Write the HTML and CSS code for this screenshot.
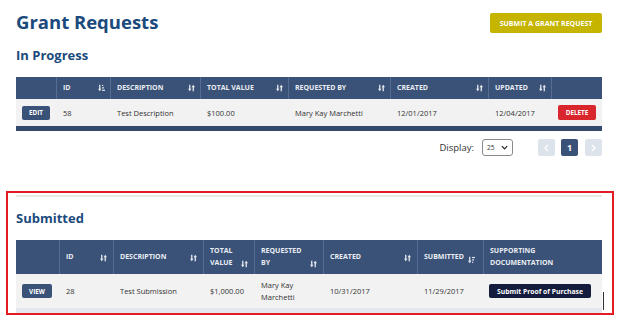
FILE: index.html
```html
<!DOCTYPE html>
<html lang="en">
<head>
<meta charset="utf-8">
<title>Grant Requests</title>
<link rel="stylesheet" href="styles.css">
</head>
<body>
<svg class="defs" width="0" height="0" aria-hidden="true">
  <defs>
    <symbol id="sort" viewBox="0 0 8 8">
      <line x1="2" y1="0.3" x2="2" y2="5.5" stroke="currentColor" stroke-width="1.5"/>
      <polygon points="0,4.8 4,4.8 2,7.8" fill="currentColor"/>
      <line x1="6" y1="2.5" x2="6" y2="7.7" stroke="currentColor" stroke-width="1.5"/>
      <polygon points="4,3.2 8,3.2 6,0.2" fill="currentColor"/>
    </symbol>
    <symbol id="sort-asc" viewBox="0 0 8 8">
      <line x1="2" y1="0.3" x2="2" y2="5.5" stroke="currentColor" stroke-width="1.5"/>
      <polygon points="0,4.8 4,4.8 2,7.8" fill="currentColor"/>
      <rect x="4.6" y="0.5" width="1.4" height="1.3" fill="currentColor"/>
      <rect x="4.6" y="3.2" width="2.4" height="1.3" fill="currentColor"/>
      <rect x="4.6" y="5.9" width="3.4" height="1.4" fill="currentColor"/>
    </symbol>
    <symbol id="sort-desc" viewBox="0 0 8 8">
      <line x1="2" y1="0.3" x2="2" y2="5.5" stroke="currentColor" stroke-width="1.5"/>
      <polygon points="0,4.8 4,4.8 2,7.8" fill="currentColor"/>
      <rect x="4.6" y="0.5" width="3.4" height="1.3" fill="currentColor"/>
      <rect x="4.6" y="3.2" width="2.4" height="1.3" fill="currentColor"/>
      <rect x="4.6" y="5.9" width="1.4" height="1.4" fill="currentColor"/>
    </symbol>
  </defs>
</svg>

<div class="page">
  <header class="top">
    <h1 class="title">Grant Requests</h1>
    <button class="btn-submit">SUBMIT A GRANT REQUEST</button>
  </header>

  <h2 class="section-title">In Progress</h2>

  <table class="grid grid-progress">
    <colgroup>
      <col class="w40"><col class="w54"><col class="w90"><col class="w88"><col class="w102"><col class="w98"><col class="w63"><col class="w51">
    </colgroup>
    <thead>
      <tr>
        <th></th>
        <th><div class="th-in"><span>ID</span><svg class="ico"><use href="#sort-asc"/></svg></div></th>
        <th><div class="th-in"><span>DESCRIPTION</span><svg class="ico"><use href="#sort"/></svg></div></th>
        <th><div class="th-in"><span>TOTAL VALUE</span><svg class="ico"><use href="#sort"/></svg></div></th>
        <th><div class="th-in"><span>REQUESTED BY</span><svg class="ico"><use href="#sort"/></svg></div></th>
        <th><div class="th-in"><span>CREATED</span><svg class="ico"><use href="#sort"/></svg></div></th>
        <th><div class="th-in"><span>UPDATED</span><svg class="ico"><use href="#sort"/></svg></div></th>
        <th></th>
      </tr>
    </thead>
    <tbody>
      <tr>
        <td class="btn-cell"><button class="btn-small btn-navy">EDIT</button></td>
        <td>58</td>
        <td>Test Description</td>
        <td>$100.00</td>
        <td>Mary Kay Marchetti</td>
        <td>12/01/2017</td>
        <td>12/04/2017</td>
        <td class="btn-cell"><button class="btn-small btn-red">DELETE</button></td>
      </tr>
    </tbody>
  </table>

  <div class="pager">
    <span class="pager-label">Display:</span>
    <div class="select"><span>25</span><svg class="chev" viewBox="0 0 8 5"><polyline points="1,1 4,4 7,1" fill="none" stroke="#222" stroke-width="1.4"/></svg></div>
    <button class="pg pg-off"><svg viewBox="0 0 5 8"><polyline points="4,1 1,4 4,7" fill="none" stroke="#fff" stroke-width="1.4"/></svg></button>
    <button class="pg pg-on">1</button>
    <button class="pg pg-off"><svg viewBox="0 0 5 8"><polyline points="1,1 4,4 1,7" fill="none" stroke="#fff" stroke-width="1.4"/></svg></button>
  </div>
</div>

<section class="submitted">
  <div class="rule"></div>
  <h2 class="section-title sub-title">Submitted</h2>
  <table class="grid grid-sub">
    <colgroup>
      <col class="w43"><col class="w54"><col class="w90"><col class="w51"><col class="w69"><col class="w94"><col class="w66"><col class="w119">
    </colgroup>
    <thead>
      <tr>
        <th></th>
        <th><div class="th-in"><span>ID</span><svg class="ico"><use href="#sort"/></svg></div></th>
        <th><div class="th-in"><span>DESCRIPTION</span><svg class="ico"><use href="#sort"/></svg></div></th>
        <th><div class="th-in"><span>TOTAL<br>VALUE</span><svg class="ico"><use href="#sort"/></svg></div></th>
        <th><div class="th-in"><span>REQUESTED<br>BY</span><svg class="ico"><use href="#sort"/></svg></div></th>
        <th><div class="th-in"><span>CREATED</span><svg class="ico"><use href="#sort"/></svg></div></th>
        <th><div class="th-in th-tight"><span>SUBMITTED</span><svg class="ico"><use href="#sort-desc"/></svg></div></th>
        <th><div class="th-in"><span>SUPPORTING<br>DOCUMENTATION</span></div></th>
      </tr>
    </thead>
    <tbody>
      <tr>
        <td class="btn-cell"><button class="btn-small btn-navy btn-view">VIEW</button></td>
        <td>28</td>
        <td>Test Submission</td>
        <td>$1,000.00</td>
        <td class="two-line">Mary Kay<br>Marchetti</td>
        <td>10/31/2017</td>
        <td>11/29/2017</td>
        <td class="btn-cell"><button class="btn-proof">Submit Proof of Purchase</button></td>
      </tr>
    </tbody>
  </table>
  <span class="cursor-line"></span>
</section>
</body>
</html>
```

FILE: styles.css
```css
* { box-sizing: border-box; }

body {
  margin: 0;
  background: #fff;
  font-family: "Open Sans", "Noto Sans", sans-serif;
  color: #333;
}

.defs { position: absolute; width: 0; height: 0; overflow: hidden; }

.page {
  width: 602px;
  padding-left: 16px;
}

.top {
  display: flex;
  justify-content: space-between;
  align-items: flex-start;
}

.title {
  margin: 10px 0 0;
  font-size: 18.5px;
  line-height: 24px;
  font-weight: 700;
  color: #1b4a7c;
}

.btn-submit {
  margin-top: 13px;
  width: 112px;
  height: 20px;
  padding: 0;
  border: none;
  border-radius: 2px;
  background: #c5b400;
  color: #fff;
  font-family: inherit;
  font-size: 7px;
  font-weight: 700;
}

.section-title {
  margin: 12px 0 0;
  font-size: 13px;
  line-height: 18px;
  font-weight: 700;
  color: #1b4a7c;
}

.grid {
  width: 586px;
  table-layout: fixed;
  border-collapse: separate;
  border-spacing: 0;
  margin-top: 13px;
}

.w40 { width: 40px; } .w43 { width: 43px; } .w51 { width: 51px; } .w54 { width: 54px; }
.w63 { width: 63px; } .w66 { width: 66px; } .w69 { width: 69px; } .w88 { width: 88px; }
.w90 { width: 90px; } .w94 { width: 94px; } .w98 { width: 98px; } .w102 { width: 102px; }
.w119 { width: 119px; }

.grid th {
  background: #3b5278;
  color: #e9edf3;
  font-size: 7px;
  font-weight: 700;
  text-align: left;
  padding: 0;
  border-left: 1px solid #566c92;
}
.grid th:first-child { border-left: none; }

.th-in {
  display: flex;
  justify-content: space-between;
  align-items: center;
  padding: 0 5px 0 7px;
  line-height: 12px;
}
.grid th + th .th-in { padding-left: 6px; }

.ico {
  width: 7px;
  height: 8px;
  flex: none;
  color: #e2e7ee;
}

.grid-progress th { height: 22px; }

.grid td {
  background: #f2f2f2;
  font-size: 7.5px;
  padding: 0 0 0 7px;
  white-space: nowrap;
  overflow: hidden;
}
.grid td.btn-cell { padding-left: 6px; }

.grid-progress td {
  height: 32px;
  border-bottom: 5px solid #34496e;
}

.btn-small {
  display: block;
  height: 14px;
  padding: 0;
  border: none;
  border-radius: 2px;
  color: #fff;
  font-family: inherit;
  font-size: 6.3px;
  font-weight: 700;
}
.btn-navy { background: #3b5278; width: 28px; }
.btn-view { width: 30px; }
.btn-red { background: #d9262c; width: 38px; height: 15px; margin-left: 1px; }

.pager {
  display: flex;
  align-items: center;
  justify-content: flex-end;
  margin-top: 8px;
  height: 17px;
}

.pager-label {
  font-size: 9.5px;
  color: #333;
}

.select {
  margin-left: 8px;
  width: 31px;
  height: 17px;
  border: 1px solid #8a8a8a;
  border-radius: 3px;
  display: flex;
  align-items: center;
  justify-content: space-between;
  padding: 0 4px 0 4px;
  font-size: 6.5px;
}
.chev { width: 7px; height: 5px; }

.pg {
  width: 17px;
  height: 17px;
  padding: 0;
  border: none;
  border-radius: 2px;
  display: flex;
  align-items: center;
  justify-content: center;
  font-family: inherit;
}
.pg svg { width: 5px; height: 8px; }
.pg-off { background: #dde3ea; margin-left: 25px; }
.pg-on { background: #3b5278; color: #fff; font-size: 9px; font-weight: 700; margin-left: 6px; }
.pg-on + .pg-off { margin-left: 7px; }

.submitted {
  position: relative;
  margin: 35px 0 0 6px;
  width: 608px;
  border: 2px solid #e31b23;
  padding: 2px 10px 0 8px;
}

.rule {
  height: 2px;
  background: #e8e8e8;
}

.sub-title { margin-top: 12px; }

.grid-sub th {
  height: 34px;
  vertical-align: middle;
}
.grid-sub .th-in { padding-right: 6px; }
.grid-sub .ico { align-self: flex-end; margin-bottom: 1px; }
.grid-sub .th-tight { justify-content: flex-start; gap: 4px; }
.grid-sub .th-tight .ico { margin-bottom: -1px; }

.grid-sub td {
  height: 39px;
  border-bottom: 5px solid #e4e8ee;
}
.grid-sub td.two-line { line-height: 12px; }

.btn-proof {
  display: block;
  width: 102px;
  height: 14px;
  padding: 0;
  border: none;
  border-radius: 2px;
  background: #131c3d;
  color: #fff;
  font-family: inherit;
  font-size: 6.8px;
  font-weight: 700;
}

.cursor-line {
  position: absolute;
  left: 595px;
  top: 99px;
  width: 1px;
  height: 18px;
  background: #333;
}
```
